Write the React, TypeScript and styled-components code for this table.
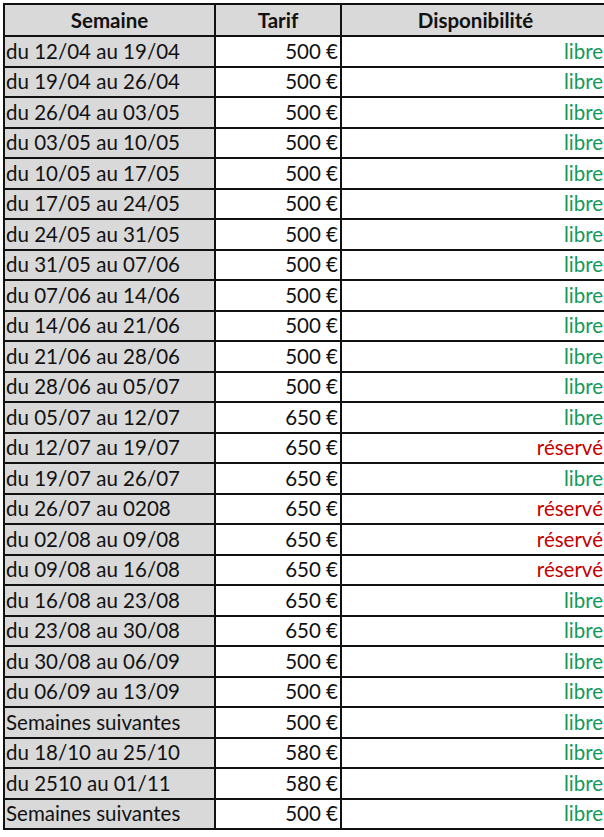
import styled, { createGlobalStyle } from "styled-components";

const GlobalStyle = createGlobalStyle`
  html, body {
    margin: 0;
    padding: 0;
    background: #fff;
    overflow: hidden;
  }
`;

const Page = styled.div`
  padding: 3px 0 0 3px;
`;

const Table = styled.table`
  border-collapse: collapse;
  table-layout: fixed;
  width: 601px;
  font-family: Lato, "Liberation Sans", sans-serif;
  font-size: 20.5px;
  color: #111;
`;

const Row = styled.tr`
  height: 30.5px;
`;

const HeadCell = styled.th<{ $last?: boolean }>`
  background: #d9d9d9;
  border: 2px solid #111;
  border-right-width: ${(p) => (p.$last ? "0" : "2px")};
  font-weight: 700;
  text-align: center;
  padding: 0 0 1px;
  padding-left: ${(p) => (p.$last ? "4px" : "0")};
  height: 29px;
`;

const WeekCell = styled.td`
  background: #d9d9d9;
  border: 2px solid #111;
  padding: 0 0 1px 1px;
  text-align: left;
  white-space: nowrap;
`;

const PriceCell = styled.td`
  background: #fff;
  border: 2px solid #111;
  padding: 0 2px 1px 0;
  text-align: right;
  white-space: nowrap;
`;

const StatusCell = styled.td<{ $booked?: boolean }>`
  background: #fff;
  border: 2px solid #111;
  border-right-width: 0;
  padding: 0 2px 1px 0;
  text-align: right;
  color: ${(p) => (p.$booked ? "#c40000" : "#14995a")};
`;

const weeks: [string, number, boolean][] = [
  ["du 12/04 au 19/04", 500, false],
  ["du 19/04 au 26/04", 500, false],
  ["du 26/04 au 03/05", 500, false],
  ["du 03/05 au 10/05", 500, false],
  ["du 10/05 au 17/05", 500, false],
  ["du 17/05 au 24/05", 500, false],
  ["du 24/05 au 31/05", 500, false],
  ["du 31/05 au 07/06", 500, false],
  ["du 07/06 au 14/06", 500, false],
  ["du 14/06 au 21/06", 500, false],
  ["du 21/06 au 28/06", 500, false],
  ["du 28/06 au 05/07", 500, false],
  ["du 05/07 au 12/07", 650, false],
  ["du 12/07 au 19/07", 650, true],
  ["du 19/07 au 26/07", 650, false],
  ["du 26/07 au 0208", 650, true],
  ["du 02/08 au 09/08", 650, true],
  ["du 09/08 au 16/08", 650, true],
  ["du 16/08 au 23/08", 650, false],
  ["du 23/08 au 30/08", 650, false],
  ["du 30/08 au 06/09", 500, false],
  ["du 06/09 au 13/09", 500, false],
  ["Semaines suivantes", 500, false],
  ["du 18/10 au 25/10", 580, false],
  ["du 2510 au 01/11", 580, false],
  ["Semaines suivantes", 500, false],
];

export default function App() {
  return (
    <>
      <GlobalStyle />
      <Page>
        <Table>
          <colgroup>
            <col style={{ width: 211 }} />
            <col style={{ width: 126 }} />
            <col style={{ width: 264 }} />
          </colgroup>
          <thead>
            <tr>
              <HeadCell>Semaine</HeadCell>
              <HeadCell>Tarif</HeadCell>
              <HeadCell $last>Disponibilité</HeadCell>
            </tr>
          </thead>
          <tbody>
            {weeks.map(([label, price, booked], i) => (
              <Row key={i}>
                <WeekCell>{label}</WeekCell>
                <PriceCell>{price} €</PriceCell>
                <StatusCell $booked={booked}>{booked ? "réservé" : "libre"}</StatusCell>
              </Row>
            ))}
          </tbody>
        </Table>
      </Page>
    </>
  );
}
